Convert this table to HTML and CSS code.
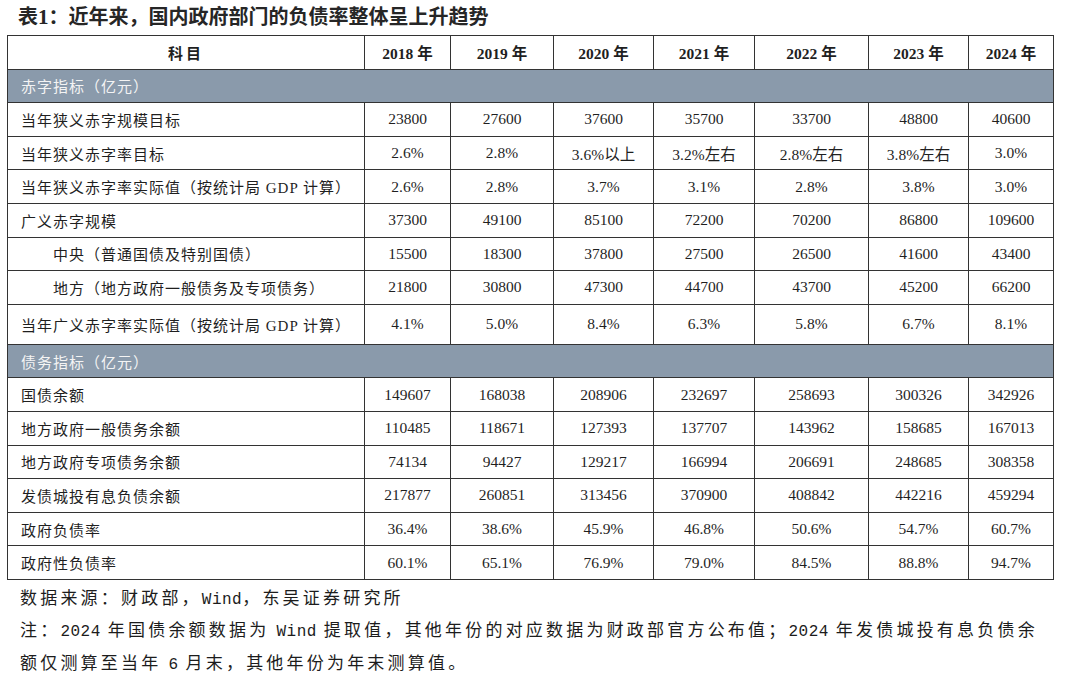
FILE: index.html
```html
<!DOCTYPE html>
<html lang="zh-CN">
<head>
<meta charset="utf-8">
<title>表1</title>
<link rel="stylesheet" href="styles.css">
</head>
<body>
<div class="page">
  <h1 class="title">表<span class="num">1</span>：近年来，国内政府部门的负债率整体呈上升趋势</h1>
  <table class="data">
    <colgroup>
      <col class="c-label"><col class="c18"><col class="c19"><col class="c20"><col class="c21"><col class="c22"><col class="c23"><col class="c24">
    </colgroup>
    <thead>
      <tr class="head">
        <th class="h-label">科目</th>
        <th>2018 年</th><th>2019 年</th><th>2020 年</th><th>2021 年</th><th>2022 年</th><th>2023 年</th><th>2024 年</th>
      </tr>
    </thead>
    <tbody>
      <tr class="section"><td colspan="8">赤字指标（亿元）</td></tr>
      <tr><td class="label">当年狭义赤字规模目标</td><td>23800</td><td>27600</td><td>37600</td><td>35700</td><td>33700</td><td>48800</td><td>40600</td></tr>
      <tr><td class="label">当年狭义赤字率目标</td><td>2.6%</td><td>2.8%</td><td>3.6%以上</td><td>3.2%左右</td><td>2.8%左右</td><td>3.8%左右</td><td>3.0%</td></tr>
      <tr><td class="label">当年狭义赤字率实际值（按统计局 GDP 计算）</td><td>2.6%</td><td>2.8%</td><td>3.7%</td><td>3.1%</td><td>2.8%</td><td>3.8%</td><td>3.0%</td></tr>
      <tr><td class="label">广义赤字规模</td><td>37300</td><td>49100</td><td>85100</td><td>72200</td><td>70200</td><td>86800</td><td>109600</td></tr>
      <tr><td class="label sub">中央（普通国债及特别国债）</td><td>15500</td><td>18300</td><td>37800</td><td>27500</td><td>26500</td><td>41600</td><td>43400</td></tr>
      <tr><td class="label sub">地方（地方政府一般债务及专项债务）</td><td>21800</td><td>30800</td><td>47300</td><td>44700</td><td>43700</td><td>45200</td><td>66200</td></tr>
      <tr class="tall"><td class="label">当年广义赤字率实际值（按统计局 GDP 计算）</td><td>4.1%</td><td>5.0%</td><td>8.4%</td><td>6.3%</td><td>5.8%</td><td>6.7%</td><td>8.1%</td></tr>
      <tr class="section"><td colspan="8">债务指标（亿元）</td></tr>
      <tr><td class="label">国债余额</td><td>149607</td><td>168038</td><td>208906</td><td>232697</td><td>258693</td><td>300326</td><td>342926</td></tr>
      <tr><td class="label">地方政府一般债务余额</td><td>110485</td><td>118671</td><td>127393</td><td>137707</td><td>143962</td><td>158685</td><td>167013</td></tr>
      <tr><td class="label">地方政府专项债务余额</td><td>74134</td><td>94427</td><td>129217</td><td>166994</td><td>206691</td><td>248685</td><td>308358</td></tr>
      <tr><td class="label">发债城投有息负债余额</td><td>217877</td><td>260851</td><td>313456</td><td>370900</td><td>408842</td><td>442216</td><td>459294</td></tr>
      <tr><td class="label">政府负债率</td><td>36.4%</td><td>38.6%</td><td>45.9%</td><td>46.8%</td><td>50.6%</td><td>54.7%</td><td>60.7%</td></tr>
      <tr><td class="label">政府性负债率</td><td>60.1%</td><td>65.1%</td><td>76.9%</td><td>79.0%</td><td>84.5%</td><td>88.8%</td><td>94.7%</td></tr>
    </tbody>
  </table>
  <div class="notes">
    <p>数据来源：财政部，<span class="en">Wind</span>，东吴证券研究所</p>
    <p>注：<span class="en">2024</span> 年国债余额数据为 <span class="en">Wind</span> 提取值，其他年份的对应数据为财政部官方公布值；<span class="en">2024</span> 年发债城投有息负债余<br>额仅测算至当年 <span class="en">6</span> 月末，其他年份为年末测算值。</p>
  </div>
</div>
</body>
</html>
```

FILE: styles.css
```css
html, body {
  margin: 0;
  padding: 0;
  background: #ffffff;
}

.page {
  width: 1080px;
  height: 676px;
  overflow: hidden;
  color: #1f1f1f;
}

.title {
  margin: 0;
  padding-left: 18px;
  height: 35px;
  line-height: 34px;
  font-family: "Liberation Serif", "Noto Sans CJK SC", serif;
  font-size: 20px;
  font-weight: bold;
  letter-spacing: 0;
  color: #262626;
}

.title .num {
  font-size: 21px;
}

.data {
  margin-left: 7px;
  width: 1046px;
  border-collapse: collapse;
  table-layout: fixed;
  font-family: "Liberation Serif", "Noto Sans CJK SC", serif;
  font-size: 15.5px;
  color: #1f1f1f;
}

.c-label { width: 357px; }
.c18 { width: 86px; }
.c19 { width: 103px; }
.c20 { width: 100px; }
.c21 { width: 101px; }
.c22 { width: 114px; }
.c23 { width: 100px; }
.c24 { width: 85px; }

.data th,
.data td {
  border: 1px solid #333333;
  padding: 0;
  text-align: center;
  vertical-align: middle;
  white-space: nowrap;
}

.data tr {
  height: 33.6px;
}

.data tr.tall {
  height: 40px;
}

.data th {
  font-weight: bold;
}

.data .h-label {
  letter-spacing: 3px;
  font-size: 15px;
}

.data td.label {
  text-align: left;
  padding-left: 13px;
  font-size: 15px;
  letter-spacing: 1px;
}

.data td.label.sub {
  padding-left: 45px;
}

.data tr.section td {
  background: #8a9aab;
  color: #f4f4f4;
  text-align: left;
  padding-left: 13px;
  font-size: 15px;
  letter-spacing: 1px;
}

.notes {
  padding-left: 20px;
  padding-top: 1px;
  font-family: "Noto Sans CJK SC", sans-serif;
  font-size: 17px;
  letter-spacing: 3.2px;
  line-height: 32.5px;
  color: #1c1c1c;
}

.notes p {
  margin: 0;
  white-space: nowrap;
}

.notes .en {
  font-family: "Liberation Mono", monospace;
  font-size: 16px;
  line-height: 1;
  letter-spacing: 0.5px;
}
```
